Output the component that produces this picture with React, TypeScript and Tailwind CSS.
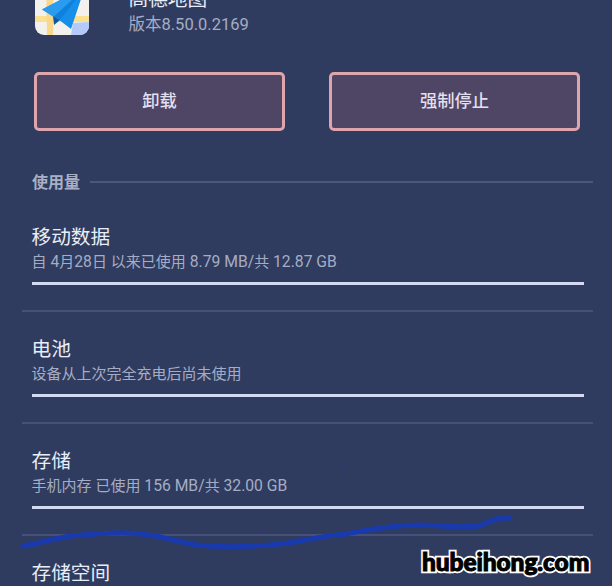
type UsageItem = { title: string; detail: string };

const usage: UsageItem[] = [
  { title: '移动数据', detail: '自 4月28日 以来已使用 8.79 MB/共 12.87 GB' },
  { title: '电池', detail: '设备从上次完全充电后尚未使用' },
  { title: '存储', detail: '手机内存 已使用 156 MB/共 32.00 GB' },
];

function AppIcon() {
  return (
    <svg viewBox="0 0 54 54" className="h-[54px] w-[54px] shrink-0 overflow-hidden rounded-[9px]">
      <rect width="54" height="54" fill="#f3f1ed" />
      <path d="M38 42 54 41V54H36Z" fill="#b3cafa" />
      <path d="M0 35H54V41H0Z" fill="#fbe08e" />
      <path d="M11 0H18V54H12Z" fill="#f9d88b" />
      <path d="M50 6 7 28.5 19 35 36 48Z" fill="#168eea" />
      <path d="M50 6 7 28.5 18.500 36Z" fill="#2a9cf0" />
      <path d="M47 11 18.500 36 24 40Z" fill="#0f80dc" />
      <path d="M18 35 19 44 24.500 39.500Z" fill="#14579f" />
    </svg>
  );
}

function ActionButton({ label }: { label: string }) {
  return (
    <button className="h-[59px] w-[251px] rounded-[5px] border-[3px] border-[#dfa5ad] bg-[#4e4664] text-[17.3px] leading-none font-medium text-[#e2dfee]">
      {label}
    </button>
  );
}

/* Latin letters and digits are set slightly larger than the Chinese text beside them. */
function MixedText({ text }: { text: string }) {
  return (
    <>
      {text.split(/([\x20-\x7e]+)/).map((part, i) => (
        <span key={i} className={i % 2 ? 'text-[15.7px] leading-none' : ''}>
          {part}
        </span>
      ))}
    </>
  );
}

function UsageRow({ title, detail }: UsageItem) {
  return (
    <section className="h-28 border-b-2 border-[#455179] pr-[9px] pl-[9.5px]">
      <h2 className="pt-[26px] text-[19.7px] leading-6 text-[#e8edf8]">{title}</h2>
      <p className="text-[15px] leading-6 whitespace-nowrap text-[#a5adc5]">
        <MixedText text={detail} />
      </p>
      <div className="mt-2 h-[3px] bg-[#d3d9f0]" />
    </section>
  );
}

export default function App() {
  return (
    <main className="relative h-[586px] w-[612px] overflow-hidden bg-[#303c5f] font-[Roboto,'Noto_Sans_CJK_SC',sans-serif]">
      <header className="-mt-[19px] flex h-[91px] pl-[35px]">
        <AppIcon />
        <div className="ml-[39.5px]">
          <h1 className="mt-[7px] text-[19.7px] leading-6 text-[#e8edf8]">高德地图</h1>
          <p className="text-[16.5px] leading-[25px] text-[#a5adc5]">版本8.50.0.2169</p>
        </div>
      </header>
      <div className="flex gap-11 pl-[34px]">
        <ActionButton label="卸载" />
        <ActionButton label="强制停止" />
      </div>
      <div className="mt-[39px] mr-[19px] ml-8 flex h-6 items-center gap-[10px]">
        <span className="pt-px text-[16px] leading-6 font-bold text-[#a9b0c6]">使用量</span>
        <div className="h-[2px] flex-1 bg-[#4b577c]" />
      </div>
      <div className="mt-[6px] mr-[19px] ml-[22px]">
        {usage.map((item) => (
          <UsageRow key={item.title} {...item} />
        ))}
        <h2 className="pt-[26px] pl-[9.5px] text-[19.7px] leading-6 text-[#e8edf8]">存储空间</h2>
      </div>
      <svg viewBox="0 0 612 586" className="pointer-events-none absolute inset-0 h-full w-full" fill="none">
        <path
          d="M23 546C38 544 54 538 72 536S105 533 121 533C157 533 171 541 197 545C224 548 250 547 281 544C310 540 322 536 346 534C371 529 398 525 420 525C445 526 461 528 479 526C489 522 496 517 510 518"
          stroke="#183aad"
          strokeWidth="5"
          strokeLinecap="round"
          strokeLinejoin="round"
        />
        <circle cx="344" cy="468" r="1.5" fill="#263d85" />
      </svg>
      <div className="absolute top-[547px] left-[422px] font-[Lato,sans-serif] text-[24.5px] leading-[30px] font-black tracking-[-0.1px] whitespace-nowrap text-black">
        <span className="absolute inset-0 [-webkit-text-stroke:4.5px_white]" aria-hidden="true">hubeihong.com</span>
        <span className="relative [-webkit-text-stroke:1px_black]">hubeihong.com</span>
      </div>
    </main>
  );
}
